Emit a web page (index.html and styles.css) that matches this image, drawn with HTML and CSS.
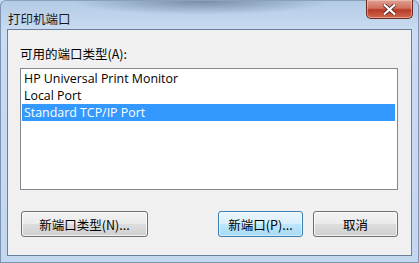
FILE: index.html
```html
<!DOCTYPE html>
<html lang="zh-CN">
<head>
    <meta charset="UTF-8">
    <title>打印机端口</title>
    <link rel="stylesheet" href="styles.css">
</head>
<body>
    <div class="window">
        <div class="titlebar">
            <span class="title">打印机端口</span>
            <button class="close-btn" aria-label="关闭">
                <svg viewBox="0 0 12 10" width="13" height="11">
                    <path d="M1.5 1 L10.5 9 M10.5 1 L1.5 9" stroke="#4a1a14" stroke-width="3.4" stroke-linecap="square"/>
                    <path d="M1.5 1 L10.5 9 M10.5 1 L1.5 9" stroke="#ffffff" stroke-width="2" stroke-linecap="square"/>
                </svg>
            </button>
        </div>

        <div class="content">
            <div class="label">可用的端口类型(A):</div>
            <ul class="port-list">
                <li>HP Universal Print Monitor</li>
                <li>Local Port</li>
                <li class="selected">Standard TCP/IP Port</li>
            </ul>

            <div class="actions">
                <button class="btn btn-wide">新端口类型(N)...</button>
                <span class="spacer"></span>
                <button class="btn btn-default">新端口(P)...</button>
                <button class="btn">取消</button>
            </div>
        </div>
    </div>
</body>
</html>
```

FILE: styles.css
```css
* {
    margin: 0;
    padding: 0;
    box-sizing: border-box;
}

body {
    font-family: "Open Sans", "Noto Sans CJK SC", sans-serif;
    font-size: 12px;
    color: #000;
    background: #c8dbf1;
}

.window {
    width: 419px;
    height: 263px;
    display: flex;
    flex-direction: column;
    background:
        radial-gradient(ellipse 130px 14px at 200px 0, rgba(70, 90, 115, 0.55), rgba(70, 90, 115, 0) 100%),
        linear-gradient(180deg, #b4cbe6 0%, #c9dcf1 30px, #c3d7ee 100%);
    border: 1px solid #7d95b3;
    border-top-color: #8aa0bb;
    border-radius: 6px 6px 0 0;
}

.titlebar {
    height: 28px;
    display: flex;
    align-items: flex-start;
    justify-content: space-between;
    padding-left: 7px;
}

.title {
    line-height: 14px;
    margin-top: 11px;
    font-family: "Noto Sans CJK SC", sans-serif;
    font-size: 12.5px;
    color: #1a1a1a;
}

.close-btn {
    width: 47px;
    height: 19px;
    margin-top: -1px;
    margin-right: 5px;
    border: 1px solid #6b2a22;
    border-top: none;
    border-radius: 0 0 5px 5px;
    background: linear-gradient(180deg, #e0a194 0%, #d0715f 45%, #b83b27 55%, #cf6b4f 100%);
    box-shadow: inset 0 0 0 1px rgba(255, 220, 210, 0.45);
    display: flex;
    align-items: center;
    justify-content: center;
}

.content {
    flex: 1;
    margin: 0 6px 6px 6px;
    border: 1px solid #6a7f99;
    background: #f0f0f0;
    padding: 16px 13px 0 12px;
    display: flex;
    flex-direction: column;
}

.label {
    line-height: 16px;
    margin-bottom: 6px;
    font-family: "Noto Sans CJK SC", sans-serif;
    font-size: 12.5px;
}

.port-list {
    list-style: none;
    height: 122px;
    border: 1px solid #828790;
    background: #fff;
    padding: 1px;
    font-size: 12.4px;
}

.port-list li {
    height: 17px;
    line-height: 17px;
    padding-left: 2px;
    margin-right: 1px;
}

.port-list li.selected {
    background: #3399ff;
    color: #fff;
}

.actions {
    display: flex;
    gap: 10px;
    margin-top: 21px;
    margin-left: 1px;
}

.spacer {
    flex: 1;
}

.btn {
    width: 85px;
    height: 26px;
    font-family: "Noto Sans CJK SC", sans-serif;
    font-size: 12.5px;
    color: #000;
    border: 1px solid #707070;
    border-radius: 3px;
    background: linear-gradient(180deg, #f2f2f2 0%, #ebebeb 49%, #dddddd 51%, #cfcfcf 100%);
    box-shadow: inset 0 0 0 1px rgba(255, 255, 255, 0.7);
}

.btn-wide {
    width: 127px;
}

.btn-default {
    border-color: #3c7fb1;
    background: linear-gradient(180deg, #eaf6fd 0%, #d9f0fc 49%, #bee6fd 51%, #a7d9f5 100%);
    box-shadow: inset 0 0 0 1px rgba(255, 255, 255, 0.5);
}
```
